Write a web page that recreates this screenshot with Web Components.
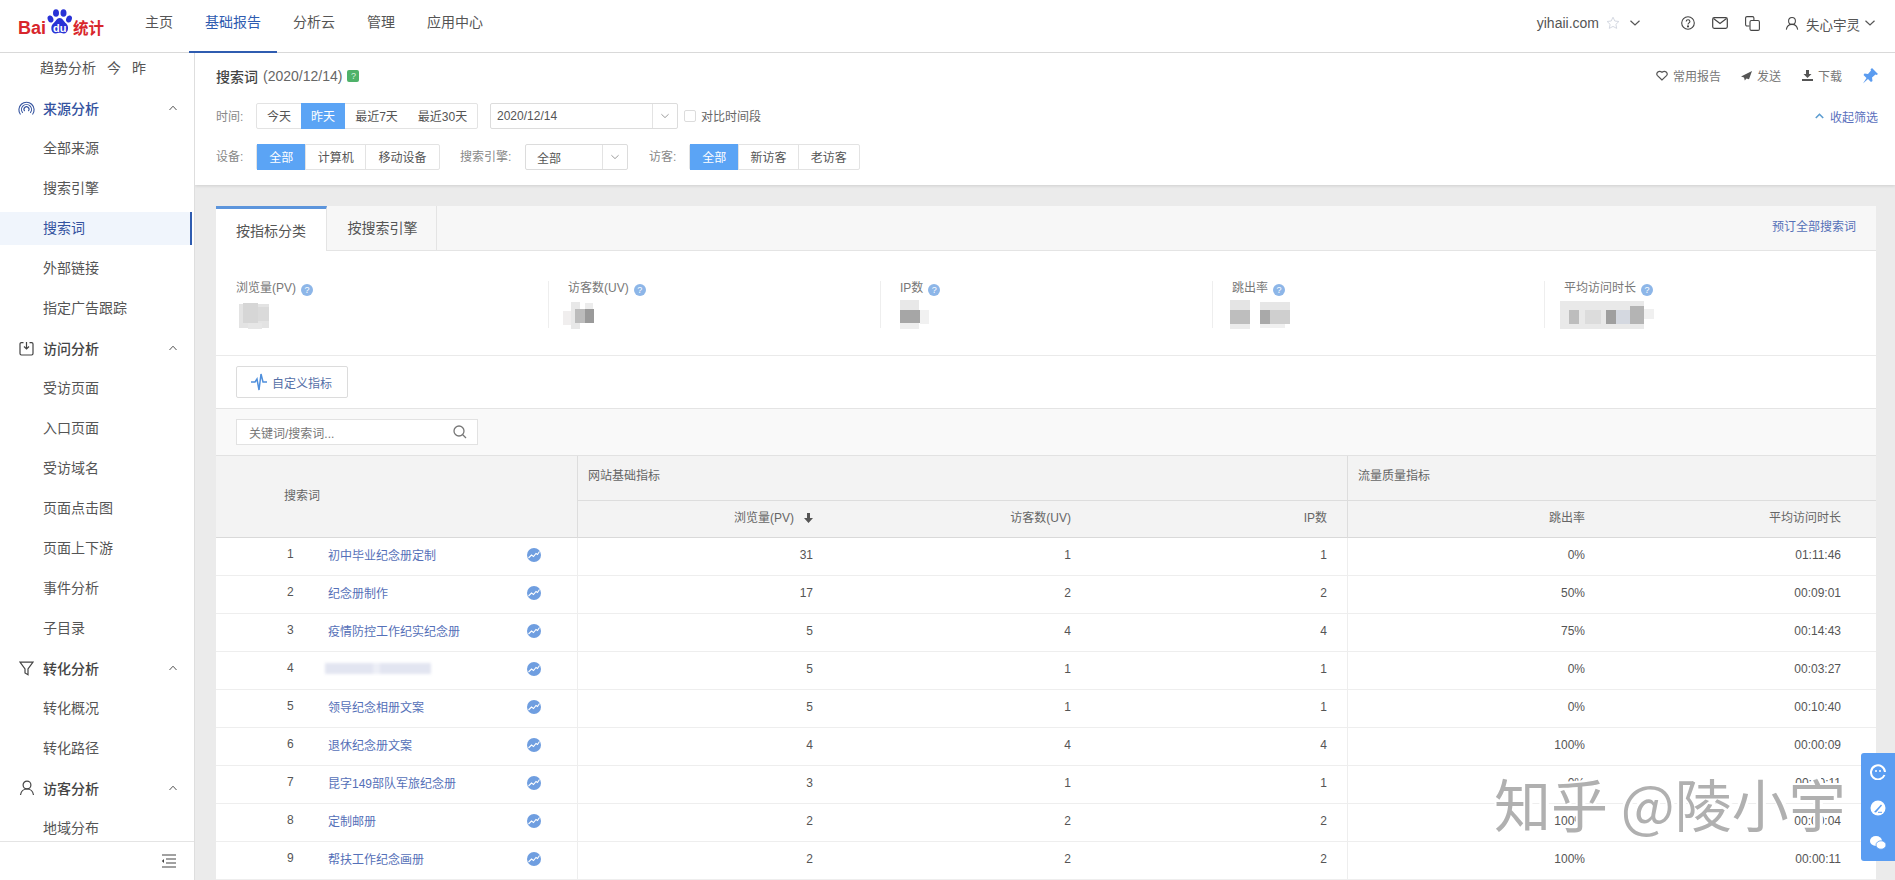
<!DOCTYPE html>
<html lang="zh">
<head>
<meta charset="utf-8">
<title>搜索词</title>
<style>
	html, body { margin: 0; padding: 0; height: 100%; overflow: hidden; background: #ebebeb; }
	body { font-family: "Liberation Sans", "Noto Sans CJK SC", sans-serif; font-size: 12px; color: #666; }
</style>
</head>
<body>
<app-shell>
	<top-bar slot="top"></top-bar>
	<side-nav slot="side"></side-nav>
	<filter-panel slot="main"></filter-panel>
	<report-card slot="main"></report-card>
</app-shell>
<float-tools></float-tools>
<water-mark>知乎 @陵小宇</water-mark>

<script>
function makeTemplate(html) {
	const tpl = document.createElement('template');
	tpl.innerHTML = html;
	return tpl;
}

class BaseElement extends HTMLElement {
	constructor() {
		super();
		this.attachShadow({ mode: 'open' });
		this.shadowRoot.appendChild(this.constructor.tpl.content.cloneNode(true));
	}
}

const icons = {
	chevDown: '<svg width="10" height="6" viewBox="0 0 10 6" fill="none" stroke="currentColor" stroke-width="1.2"><path d="M.5.8 5 5 9.5.8"/></svg>',
	chevUp: '<svg width="10" height="6" viewBox="0 0 10 6" fill="none" stroke="currentColor" stroke-width="1"><path d="M1.5 5 5 1.2 8.500 5"/></svg>',
	user: '<svg width="16" height="16" viewBox="0 0 16 16" fill="none" stroke="currentColor" stroke-width="1.2"><circle cx="8" cy="5" r="3.900"/><path d="M1.500 15c.6-4 3-6 6.500-6s5.900 2 6.500 6"/></svg>',
};

/* ---------- shell ---------- */
class AppShell extends BaseElement {
	static tpl = makeTemplate(`
	<style>
		:host { display: flex; flex-direction: column; height: 880px; overflow: hidden; }
		#body { flex: 1; display: flex; min-height: 0; }
		#main { flex: 1; min-width: 0; background: #ebebeb; overflow: hidden; }
	</style>
	<slot name="top"></slot>
	<div id="body">
		<slot name="side"></slot>
		<div id="main"><slot name="main"></slot></div>
	</div>`);
}

/* ---------- top bar ---------- */
class TopBar extends BaseElement {
	static tpl = makeTemplate(`
	<style>
		:host { display: flex; align-items: stretch; height: 53px; box-sizing: border-box; background: #fff; border-bottom: 1px solid #d9d9d9; color: #555; flex: none; }
		#logo { width: 129px; flex: none; padding: 9px 0 0 18px; box-sizing: border-box; }
		#logo svg { display: block; }
		nav { display: flex; }
		nav a { padding: 0 16px; line-height: 45px; font-size: 14px; height: 53px; box-sizing: border-box; color: #555; }
		nav a.on { color: #2f5cb0; border-bottom: 2px solid #2f5cb0; }
		#right { margin-left: auto; display: flex; align-items: center; height: 46px; color: #555; }
		#site { font-size: 14px; margin-right: 7px; }
		#star { color: #d5d9e2; margin-right: 10px; display: flex; }
		.chev { display: flex; color: #555; }
		.ic { display: flex; color: #444; }
		#name { font-size: 13.500px; margin: 1px 4px 0 7px; width: 55px; white-space: nowrap; }
	</style>
	<div id="logo">
		<svg width="90" height="34" viewBox="0 0 90 34">
			<g fill="#2932d6">
				<ellipse cx="32.500" cy="10" rx="2.800" ry="3.600" transform="rotate(-20 32.500 10)"/>
				<ellipse cx="38" cy="4" rx="3" ry="3.800"/>
				<ellipse cx="45.500" cy="4" rx="3" ry="3.800"/>
				<ellipse cx="51" cy="10" rx="2.800" ry="3.600" transform="rotate(20 51 10)"/>
				<path d="M41.700 9c3 0 4 3.500 6.500 5.500 3 2.500 2.500 10-2.500 10-1.800 0-2.500-.7-4-.7s-2.200.7-4 .7c-5 0-5.500-7.500-2.500-10 2.500-2 3.500-5.500 6.500-5.500z"/>
			</g>
			<text x="0" y="25" font-family="Liberation Sans" font-weight="700" font-size="18" fill="#d8262c">Bai</text>
			<text x="41.700" y="22.500" text-anchor="middle" font-family="Liberation Sans" font-weight="700" font-size="11" fill="#fff">du</text>
			<text x="55" y="24.500" font-family="Noto Sans CJK SC" font-weight="700" font-size="15.500" fill="#d8262c">统计</text>
		</svg>
	</div>
	<nav>
		<a>主页</a><a class="on">基础报告</a><a>分析云</a><a>管理</a><a>应用中心</a>
	</nav>
	<div id="right">
		<span id="site">yihaii.com</span>
		<span id="star"><svg width="14" height="14" viewBox="0 0 14 14" fill="none" stroke="currentColor"><path d="M7 1.200 8.800 5l4.100.5-3 2.800.8 4.100L7 10.400 3.300 12.400l.8-4.100-3-2.800L5.200 5z"/></svg></span>
		<span class="chev" style="margin-right:41px">${icons.chevDown}</span>
		<span class="ic" style="margin-right:17px"><svg width="14" height="14" viewBox="0 0 14 14" fill="none" stroke="currentColor" stroke-width="1.100"><circle cx="7" cy="7" r="6.300"/><path d="M5.200 5.600C5.200 3 8.900 3.200 8.900 5.400c0 1.500-1.900 1.500-1.900 3.100"/><circle cx="7" cy="10.400" r=".5" fill="currentColor"/></svg></span>
		<span class="ic" style="margin-right:17px"><svg width="16" height="12" viewBox="0 0 16 12" fill="none" stroke="currentColor" stroke-width="1.200"><rect x=".7" y=".7" width="14.600" height="10.600" rx="1.500"/><path d="m1.500 1.500 6.500 5 6.500-5"/></svg></span>
		<span class="ic" style="margin-right:25px"><svg width="15" height="15" viewBox="0 0 15 15" fill="none" stroke="currentColor" stroke-width="1.100"><path d="M4.500 10H2a1.400 1.400 0 0 1-1.400-1.400V2A1.400 1.400 0 0 1 2 .6h5.500A1.400 1.400 0 0 1 8.900 2v2"/><rect x="5" y="4.500" width="9.400" height="9.900" rx="1.400"/></svg></span>
		<span class="ic">${icons.user.replace('width="16" height="16"', 'width="14" height="15"')}</span>
		<span id="name">失心宇灵</span>
		<span class="chev" style="margin-right:20px">${icons.chevDown}</span>
	</div>`);
}

/* ---------- side nav ---------- */
class SideGroup extends BaseElement {
	static tpl = makeTemplate(`
	<style>
		:host { display: flex; align-items: center; height: 40px; font-size: 14px; color: #444; font-weight: 500; padding-left: 18px; box-sizing: border-box; width: 192px; }
		:host([on]) { color: #34539f; }
		#ic { width: 17px; height: 17px; margin-right: 8px; display: flex; align-items: center; justify-content: center; }
		#chev { margin-left: auto; margin-right: 14px; display: flex; color: #555; }
	</style>
	<span id="ic"><slot name="icon"></slot></span>
	<slot></slot>
	<span id="chev">${icons.chevUp}</span>`);
}

class SideItem extends BaseElement {
	static tpl = makeTemplate(`
	<style>
		:host { display: block; height: 40px; line-height: 40px; font-size: 14px; color: #555; padding-left: 43px; box-sizing: border-box; width: 192px; position: relative; }
		:host([on]) { color: #34539f; }
		:host([on])::before { content: ""; position: absolute; left: 0; right: 0; top: 4px; bottom: 3px; background: #f0f5fc; border-right: 2px solid #2f5cb0; z-index: 0; }
		span { position: relative; }
	</style>
	<span><slot></slot></span>`);
}

class SideNav extends BaseElement {
	static tpl = makeTemplate(`
	<style>
		:host { display: flex; flex-direction: column; width: 195px; flex: none; box-sizing: border-box; background: #fff; border-right: 1px solid #dedede; }
		#list { flex: 1; overflow: hidden; min-height: 0; }
		#inner { margin-top: -5px; }
		#trend { display: block; height: 40px; line-height: 40px; padding-left: 40px; font-size: 14px; color: #555; }
		#trend span { margin-left: 11px; }
		#foot { height: 38px; flex: none; border-top: 1px solid #e4e4e4; display: flex; justify-content: flex-end; align-items: center; padding-right: 18px; color: #555; }
	</style>
	<div id="list"><div id="inner">
		<div id="trend">趋势分析<span>今</span><span>昨</span></div>
		<side-group on>
			<svg slot="icon" width="17" height="17" viewBox="0 0 17 17" fill="none" stroke="#34539f" stroke-width="1.100"><path d="M2.500 14.500A7.600 7.600 0 1 1 14.500 14.500"/><path d="M4.700 12.800a5 5 0 1 1 7.600 0"/><path d="M6.700 11a2.500 2.500 0 1 1 3.600 0"/></svg>
			来源分析
		</side-group>
		<side-item>全部来源</side-item>
		<side-item>搜索引擎</side-item>
		<side-item on>搜索词</side-item>
		<side-item>外部链接</side-item>
		<side-item>指定广告跟踪</side-item>
		<side-group>
			<svg slot="icon" width="15" height="15" viewBox="0 0 15 15" fill="none" stroke="#444" stroke-width="1.200"><path d="M4.500 1.600H2.400A1.400 1.400 0 0 0 1 3v9.600A1.400 1.400 0 0 0 2.400 14h10.200a1.400 1.400 0 0 0 1.400-1.400V3a1.400 1.400 0 0 0-1.400-1.400h-2.100"/><path d="M7.500 1v6.500M5 5.500l2.500 2.500L10 5.500"/></svg>
			访问分析
		</side-group>
		<side-item>受访页面</side-item>
		<side-item>入口页面</side-item>
		<side-item>受访域名</side-item>
		<side-item>页面点击图</side-item>
		<side-item>页面上下游</side-item>
		<side-item>事件分析</side-item>
		<side-item>子目录</side-item>
		<side-group>
			<svg slot="icon" width="15" height="15" viewBox="0 0 15 15" fill="none" stroke="#444" stroke-width="1.200"><path d="M1 1.200h13L9 8v5.800L6 12V8z"/></svg>
			转化分析
		</side-group>
		<side-item>转化概况</side-item>
		<side-item>转化路径</side-item>
		<side-group>
			${icons.user.replace('<svg', '<svg slot="icon"')}
			访客分析
		</side-group>
		<side-item>地域分布</side-item>
	</div></div>
	<div id="foot">
		<svg width="15" height="14" viewBox="0 0 15 14" fill="none" stroke="#444" stroke-width="1.200"><path d="M1 1h14M5 5h10M5 9h10M1 13h14"/><path d="M3 5 .8 7 3 9z" fill="#444" stroke="none"/></svg>
	</div>`);
}

/* ---------- small controls ---------- */
class SegGroup extends BaseElement {
	static tpl = makeTemplate(`
	<style>
		:host { display: inline-flex; height: 26px; box-sizing: border-box; border: 1px solid #e3e3e3; border-radius: 2px; background: #fff; color: #555; }
		::slotted(seg-btn) { border-right: 1px solid #e3e3e3; }
		::slotted(seg-btn:last-child) { border-right: 0; }
		:host([plain]) ::slotted(seg-btn) { border-right: 0; }
	</style>
	<slot></slot>`);
}

class SegBtn extends BaseElement {
	static tpl = makeTemplate(`
	<style>
		:host { display: flex; align-items: center; justify-content: center; height: 26px; margin-top: -1px; box-sizing: border-box; font-size: 12px; padding-bottom: 1px; }
		:host([on]) { background: #5ba4f5; color: #fff; }
	</style>
	<slot></slot>`);
}

class SelectBox extends BaseElement {
	static tpl = makeTemplate(`
	<style>
		:host { display: inline-flex; height: 26px; box-sizing: border-box; border: 1px solid #dcdcdc; border-radius: 2px; background: #fff; color: #555; font-size: 12px; align-items: center; }
		#val { flex: 1; padding-left: var(--pad, 10px); }
		#arr { width: 25px; height: 100%; border-left: 1px solid #e3e3e3; display: flex; align-items: center; justify-content: center; color: #999; box-sizing: border-box; }
	</style>
	<span id="val"><slot></slot></span>
	<span id="arr">${icons.chevDown.replace('width="10"', 'width="8"')}</span>`);
}

/* ---------- filter panel ---------- */
class FilterPanel extends BaseElement {
	static tpl = makeTemplate(`
	<style>
		:host { display: block; height: 132px; box-sizing: border-box; background: #fff; padding: 0 17px 0 21px; box-shadow: 0 1px 3px rgba(0,0,0,.12); position: relative; }
		.row { display: flex; align-items: center; }
		#head { height: 45px; margin-bottom: 5px; }
		#title { font-size: 14px; color: #444; font-weight: 500; }
		#date { font-size: 14px; color: #666; margin-left: 5px; }
		#badge { width: 12px; height: 12px; margin-left: 5px; background: #4fb26a; border-radius: 2px; color: #d8f3df; font-size: 9px; line-height: 12px; text-align: center; }
		#acts { margin-left: auto; display: flex; align-items: center; color: #777; font-size: 12px; }
		#acts span { display: flex; align-items: center; gap: 5px; }
		.lb { color: #888; font-size: 12px; width: 40px; flex: none; padding-bottom: 1px; }
		#r1 { height: 26px; }
		#r2 { height: 26px; margin-top: 15px; }
		#r2 .lb { padding-bottom: 4px; }
		#cmp { display: flex; align-items: center; margin-left: 6px; color: #666; padding-bottom: 1px; }
		#cmp i { width: 10px; height: 10px; border: 1px solid #dcdcdc; border-radius: 2px; margin-right: 5px; }
		#fold { margin-left: auto; color: #5a70bd; display: flex; align-items: center; gap: 6px; }
	</style>
	<div class="row" id="head">
		<span id="title">搜索词</span><span id="date">(2020/12/14)</span><span id="badge">?</span>
		<div id="acts">
			<span style="margin-right:20px"><svg width="12" height="11" viewBox="0 0 12 11" fill="none" stroke="#555" stroke-width="1.200"><path d="M6 10 1.500 5.600C-.5 3.200 2.800-.4 6 2.300 9.200-.4 12.500 3.200 10.500 5.600z"/></svg>常用报告</span>
			<span style="margin-right:21px"><svg width="11" height="10" viewBox="0 0 11 10" fill="#555"><path d="M11 0 0 5.500l3 1 .8 3 1.700-2 2.500.8z"/></svg>发送</span>
			<span style="margin-right:20px"><svg width="11" height="11" viewBox="0 0 11 11" fill="#555"><path d="M4 0h3v4h2.500L5.500 8 1.500 4H4zM0 9h11v2H0z"/></svg>下载</span>
			<span><svg width="16" height="16" viewBox="0 0 16 16" fill="#5b9cf0"><path d="M10 0 16 6l-1.500 1-1-.5-3.500 3 .5 3.500-1.500 1-3-3L1 15.500l3.500-5.500-3-3 1-1.500 3.500.5 3-3.500-.5-1z"/></svg></span>
		</div>
	</div>
	<div class="row" id="r1">
		<span class="lb">时间:</span>
		<seg-group plain style="width:222px">
			<seg-btn style="width:44px">今天</seg-btn>
			<seg-btn on style="width:44px">昨天</seg-btn>
			<seg-btn style="width:63px">最近7天</seg-btn>
			<seg-btn style="width:69px">最近30天</seg-btn>
		</seg-group>
		<select-box style="width:188px;margin-left:12px;--pad:6px;font-size:12px">2020/12/14</select-box>
		<span id="cmp"><i></i>对比时间段</span>
		<span id="fold"><svg width="9" height="6" viewBox="0 0 9 6" fill="none" stroke="#5b9cd0" stroke-width="1.600"><path d="M.8 5 4.500 1.300 8.200 5"/></svg>收起筛选</span>
	</div>
	<div class="row" id="r2">
		<span class="lb">设备:</span>
		<seg-group style="width:184px">
			<seg-btn on style="width:50px">全部</seg-btn>
			<seg-btn style="width:60px">计算机</seg-btn>
			<seg-btn style="width:74px">移动设备</seg-btn>
		</seg-group>
		<span class="lb" style="width:65px;margin-left:20px">搜索引擎:</span>
		<select-box style="width:103px;--pad:11px">全部</select-box>
		<span class="lb" style="margin-left:21px">访客:</span>
		<seg-group style="width:171px">
			<seg-btn on style="width:50px">全部</seg-btn>
			<seg-btn style="width:60px">新访客</seg-btn>
			<seg-btn style="width:61px">老访客</seg-btn>
		</seg-group>
	</div>`);
}

/* ---------- report card ---------- */
class HelpDot extends BaseElement {
	static tpl = makeTemplate(`
	<style>
		:host { display: inline-block; width: 12px; height: 12px; border-radius: 50%; background: #8db6e8; color: #fff; font-size: 9px; line-height: 12px; text-align: center; margin-left: 5px; vertical-align: -1px; }
	</style>?`);
}

// mosaic used where the original screenshot was blurred out
class BlurBlot extends BaseElement {
	static tpl = makeTemplate(`
	<style>
		:host { display: block; position: relative; height: 28px; }
		i { position: absolute; display: block; }
	</style>`);
	connectedCallback() {
		const cells = (this.getAttribute('cells') || '').split(';');
		cells.forEach((cell) => {
			const p = cell.split(',');
			const el = document.createElement('i');
			el.style.cssText = `left:${p[0]}px;top:${p[1]}px;width:${p[2]}px;height:${p[3]}px;background:${p[4]}`;
			this.shadowRoot.appendChild(el);
		});
	}
}

class MetricItem extends BaseElement {
	static tpl = makeTemplate(`
	<style>
		:host { display: block; flex: 0 0 332px; box-sizing: border-box; height: 47px; padding-left: 20px; position: relative; }
		:host(:not(:first-child))::before { content: ""; position: absolute; left: 0; top: 0; bottom: 0; border-left: 1px solid #eee; }
		#lb { font-size: 12px; color: #777; line-height: 14px; height: 22px; }
	</style>
	<div id="lb"><slot name="label"></slot><help-dot></help-dot></div>
	<slot></slot>`);
}

const rows = [
	['1', '初中毕业纪念册定制', '31', '1', '1', '0%', '01:11:46'],
	['2', '纪念册制作', '17', '2', '2', '50%', '00:09:01'],
	['3', '疫情防控工作纪实纪念册', '5', '4', '4', '75%', '00:14:43'],
	['4', '', '5', '1', '1', '0%', '00:03:27'],
	['5', '领导纪念相册文案', '5', '1', '1', '0%', '00:10:40'],
	['6', '退休纪念册文案', '4', '4', '4', '100%', '00:00:09'],
	['7', '昆字149部队军旅纪念册', '3', '1', '1', '0%', '00:10:11'],
	['8', '定制邮册', '2', '2', '2', '100%', '00:00:04'],
	['9', '帮扶工作纪念画册', '2', '2', '2', '100%', '00:00:11'],
];

const trendIcon = '<svg width="14" height="14" viewBox="0 0 14 14"><circle cx="7" cy="7" r="7" fill="#6f9ee0"/><path d="M1.500 10 4.500 7 6.500 8.500 9 5.500 10.500 6.500 12.500 3.500" fill="none" stroke="#fff" stroke-width="1.100"/></svg>';

class DataTable extends BaseElement {
	static tpl = makeTemplate(`
	<style>
		:host { display: block; }
		table { width: 1660px; table-layout: fixed; border-collapse: separate; border-spacing: 0; font-size: 12px; color: #555; }
		th { font-weight: normal; background: #f3f3f3; color: #666; box-sizing: border-box; text-align: right; padding: 0 20px 5px 0; }
		thead tr:first-child th { height: 45px; border-bottom: 1px solid #ddd; text-align: left; padding-left: 10px; padding-bottom: 8px; }
		thead tr:last-child th { height: 37px; border-bottom: 1px solid #d9d9d9; }
		th.div, td.div { border-right: 1px solid #ddd; }
		td.div { border-right-color: #eee; }
		thead tr:first-child th.word { padding-left: 68px; border-bottom: 1px solid #d9d9d9; padding-bottom: 4px; }
		td { height: 38px; box-sizing: border-box; border-bottom: 1px solid #eee; text-align: right; padding: 0 20px 3px 0; background: #fff; }
		td.wd { padding: 0 0 5px 0; text-align: left; }
		.wrap { display: flex; align-items: center; }
		.no { width: 112px; flex: none; padding-left: 71px; box-sizing: border-box; color: #555; }
		.txt { color: #5570b8; width: 199px; flex: none; }
		.chart { display: flex; margin-top: 1px; }
		.smudge { display: block; width: 106px; height: 11px; margin-left: -3px; background: linear-gradient(90deg, #e2e5f1 0 45%, #eceef6 45% 52%, #e2e5f1 52%); filter: blur(1.500px); }
		.arrow { margin-left: 10px; vertical-align: -1px; }
	</style>
	<table>
		<colgroup><col style="width:362px"><col style="width:255px"><col style="width:258px"><col style="width:257px"><col style="width:257px"><col style="width:271px"></colgroup>
		<thead>
			<tr>
				<th rowspan="2" class="div word">搜索词</th>
				<th colspan="3" class="div">网站基础指标</th>
				<th colspan="2">流量质量指标</th>
			</tr>
			<tr>
				<th>浏览量(PV)<svg class="arrow" width="9" height="10" viewBox="0 0 9 10" fill="#555"><path d="M3 0h3v5h3L4.500 10 0 5h3z"/></svg></th>
				<th>访客数(UV)</th>
				<th class="div">IP数</th>
				<th>跳出率</th>
				<th style="padding-right:35px">平均访问时长</th>
			</tr>
		</thead>
		<tbody id="tb"></tbody>
	</table>`);
	connectedCallback() {
		this.shadowRoot.getElementById('tb').innerHTML = rows.map((r) => `
			<tr>
				<td class="wd div"><div class="wrap">
					<span class="no">${r[0]}</span>
					<span class="txt">${r[1] || '<span class="smudge"></span>'}</span>
					<span class="chart">${trendIcon}</span>
				</div></td>
				<td>${r[2]}</td>
				<td>${r[3]}</td>
				<td class="div">${r[4]}</td>
				<td>${r[5]}</td>
				<td style="padding-right:35px">${r[6]}</td>
			</tr>`).join('');
	}
}

class ReportCard extends BaseElement {
	static tpl = makeTemplate(`
	<style>
		:host { display: block; margin: 21px 19px 0 21px; background: #fff; font-size: 12px; }
		#tabs { display: flex; height: 45px; box-sizing: border-box; background: #f7f7f7; border-bottom: 1px solid #e4e4e4; }
		.tab { width: 110px; height: 44px; box-sizing: border-box; display: flex; align-items: center; justify-content: center; font-size: 14px; color: #555; border-right: 1px solid #e4e4e4; padding: 0 0 2px 2px; }
		.tab.on { width: 111px; height: 45px; background: #fff; border-top: 3px solid #5c95dc; padding: 0; }
		#book { margin-left: auto; margin-right: 20px; line-height: 43px; color: #5570b8; }
		#metrics { display: flex; height: 105px; box-sizing: border-box; padding-top: 30px; border-bottom: 1px solid #eaeaea; }
		#btnrow { height: 53px; box-sizing: border-box; padding: 10px 0 0 20px; border-bottom: 1px solid #e4e4e4; }
		#custom { display: inline-flex; align-items: center; width: 112px; height: 32px; box-sizing: border-box; border: 1px solid #dcdcdc; border-radius: 2px; padding-left: 14px; gap: 5px; color: #5570a8; }
		#search { height: 47px; box-sizing: border-box; padding: 10px 0 0 20px; background: #f9f9f9; border-bottom: 1px solid #e2e2e2; }
		#input { width: 242px; height: 26px; box-sizing: border-box; background: #fff; border: 1px solid #e2e2e2; display: flex; align-items: center; padding: 0 10px 0 12px; color: #777; justify-content: space-between; }
	</style>
	<div id="tabs">
		<div class="tab on">按指标分类</div>
		<div class="tab">按搜索引擎</div>
		<div id="book">预订全部搜索词</div>
	</div>
	<div id="metrics">
		<metric-item><span slot="label">浏览量(PV)</span>
			<blur-blot cells="3,1,30,24,#e3e3e3;7,0,15,20,#d6d6d6;22,4,11,14,#dadada;12,20,14,6,#e6e6e6"></blur-blot></metric-item>
		<metric-item><span slot="label">访客数(UV)</span>
			<blur-blot cells="-5,8,8,14,#f0eeee;3,-1,9,27,#e8e8e8;7,6,10,14,#bcbcbc;17,6,9,14,#9a9a9a;17,0,8,6,#ececec"></blur-blot></metric-item>
		<metric-item><span slot="label">IP数</span>
			<blur-blot cells="0,-3,19,10,#e8e8e8;0,7,20,13,#a6a6a6;0,20,19,6,#eeeeee;20,7,9,14,#f1f1f1"></blur-blot></metric-item>
		<metric-item><span slot="label">跳出率</span>
			<blur-blot cells="-2,-3,20,10,#e4e4e4;-2,7,20,14,#bebebe;-2,21,20,5,#ececec;28,-1,30,8,#e6e6e6;28,7,10,14,#a9a9a9;38,7,20,14,#cfcfcf;28,21,25,4,#f0f0f0"></blur-blot></metric-item>
		<metric-item><span slot="label">平均访问时长</span>
			<blur-blot cells="-4,-2,84,28,#e9e9e9;5,7,10,14,#bdbdbd;21,7,16,14,#dcdcdc;42,7,10,14,#9f9f9f;52,7,14,14,#d4d8e0;66,3,14,18,#b4b4b4;80,6,10,10,#f0f0f0"></blur-blot></metric-item>
	</div>
	<div id="btnrow">
		<div id="custom">
			<svg width="16" height="18" viewBox="0 0 16 18" fill="none" stroke="#4f8fdc" stroke-width="1.500"><path d="M0 9h4l2-3 2 11 2-16 2 8h4"/></svg>
			自定义指标
		</div>
	</div>
	<div id="search">
		<div id="input">
			<span>关键词/搜索词...</span>
			<svg width="14" height="14" viewBox="0 0 14 14" fill="none" stroke="#777" stroke-width="1.300"><circle cx="6" cy="6" r="5"/><path d="m9.500 9.500 3.500 3.500"/></svg>
		</div>
	</div>
	<data-table></data-table>`);
}

/* ---------- overlays ---------- */
class FloatTools extends BaseElement {
	static tpl = makeTemplate(`
	<style>
		:host { position: fixed; right: 0; top: 753px; width: 34px; height: 108px; box-sizing: border-box; background: #5a9df2; border-radius: 3px 0 0 3px; display: flex; flex-direction: column; align-items: center; justify-content: space-around; padding: 1px 0; }
		svg { display: block; }
	</style>
	<svg width="16" height="16" viewBox="0 0 16 16" fill="none"><path d="M14.500 11A7 7 0 1 1 15 8" stroke="#fff" stroke-width="2"/><circle cx="6" cy="7" r="1" fill="#fff"/><circle cx="10" cy="7" r="1" fill="#fff"/></svg>
	<svg width="16" height="16" viewBox="0 0 16 16"><circle cx="8" cy="8" r="7.500" fill="#fff"/><path d="M4 12 11 4.500l1 1L6 12.500z" fill="#5a9df2"/><path d="M8 12.300h4" stroke="#5a9df2"/></svg>
	<svg width="16" height="14" viewBox="0 0 16 14" fill="#fff"><ellipse cx="6" cy="5" rx="6" ry="5"/><ellipse cx="11" cy="9" rx="5" ry="4.200" stroke="#5a9df2" stroke-width=".8"/></svg>`);
}

class WaterMark extends BaseElement {
	static tpl = makeTemplate(`
	<style>
		:host { position: fixed; left: 1494px; top: 762px; font-family: "Noto Sans CJK SC", sans-serif; font-size: 57px; line-height: 80px; color: #b0b0b0; white-space: nowrap; text-shadow: 2px 2px 0 rgba(255,255,255,.9), -2px -2px 0 #fff, 3px -2px 0 #fff; pointer-events: none; }
	</style>
	<slot></slot>`);
}

customElements.define('app-shell', AppShell);
customElements.define('top-bar', TopBar);
customElements.define('side-group', SideGroup);
customElements.define('side-item', SideItem);
customElements.define('side-nav', SideNav);
customElements.define('seg-group', SegGroup);
customElements.define('seg-btn', SegBtn);
customElements.define('select-box', SelectBox);
customElements.define('filter-panel', FilterPanel);
customElements.define('help-dot', HelpDot);
customElements.define('blur-blot', BlurBlot);
customElements.define('metric-item', MetricItem);
customElements.define('data-table', DataTable);
customElements.define('report-card', ReportCard);
customElements.define('float-tools', FloatTools);
customElements.define('water-mark', WaterMark);
</script>
</body>
</html>
